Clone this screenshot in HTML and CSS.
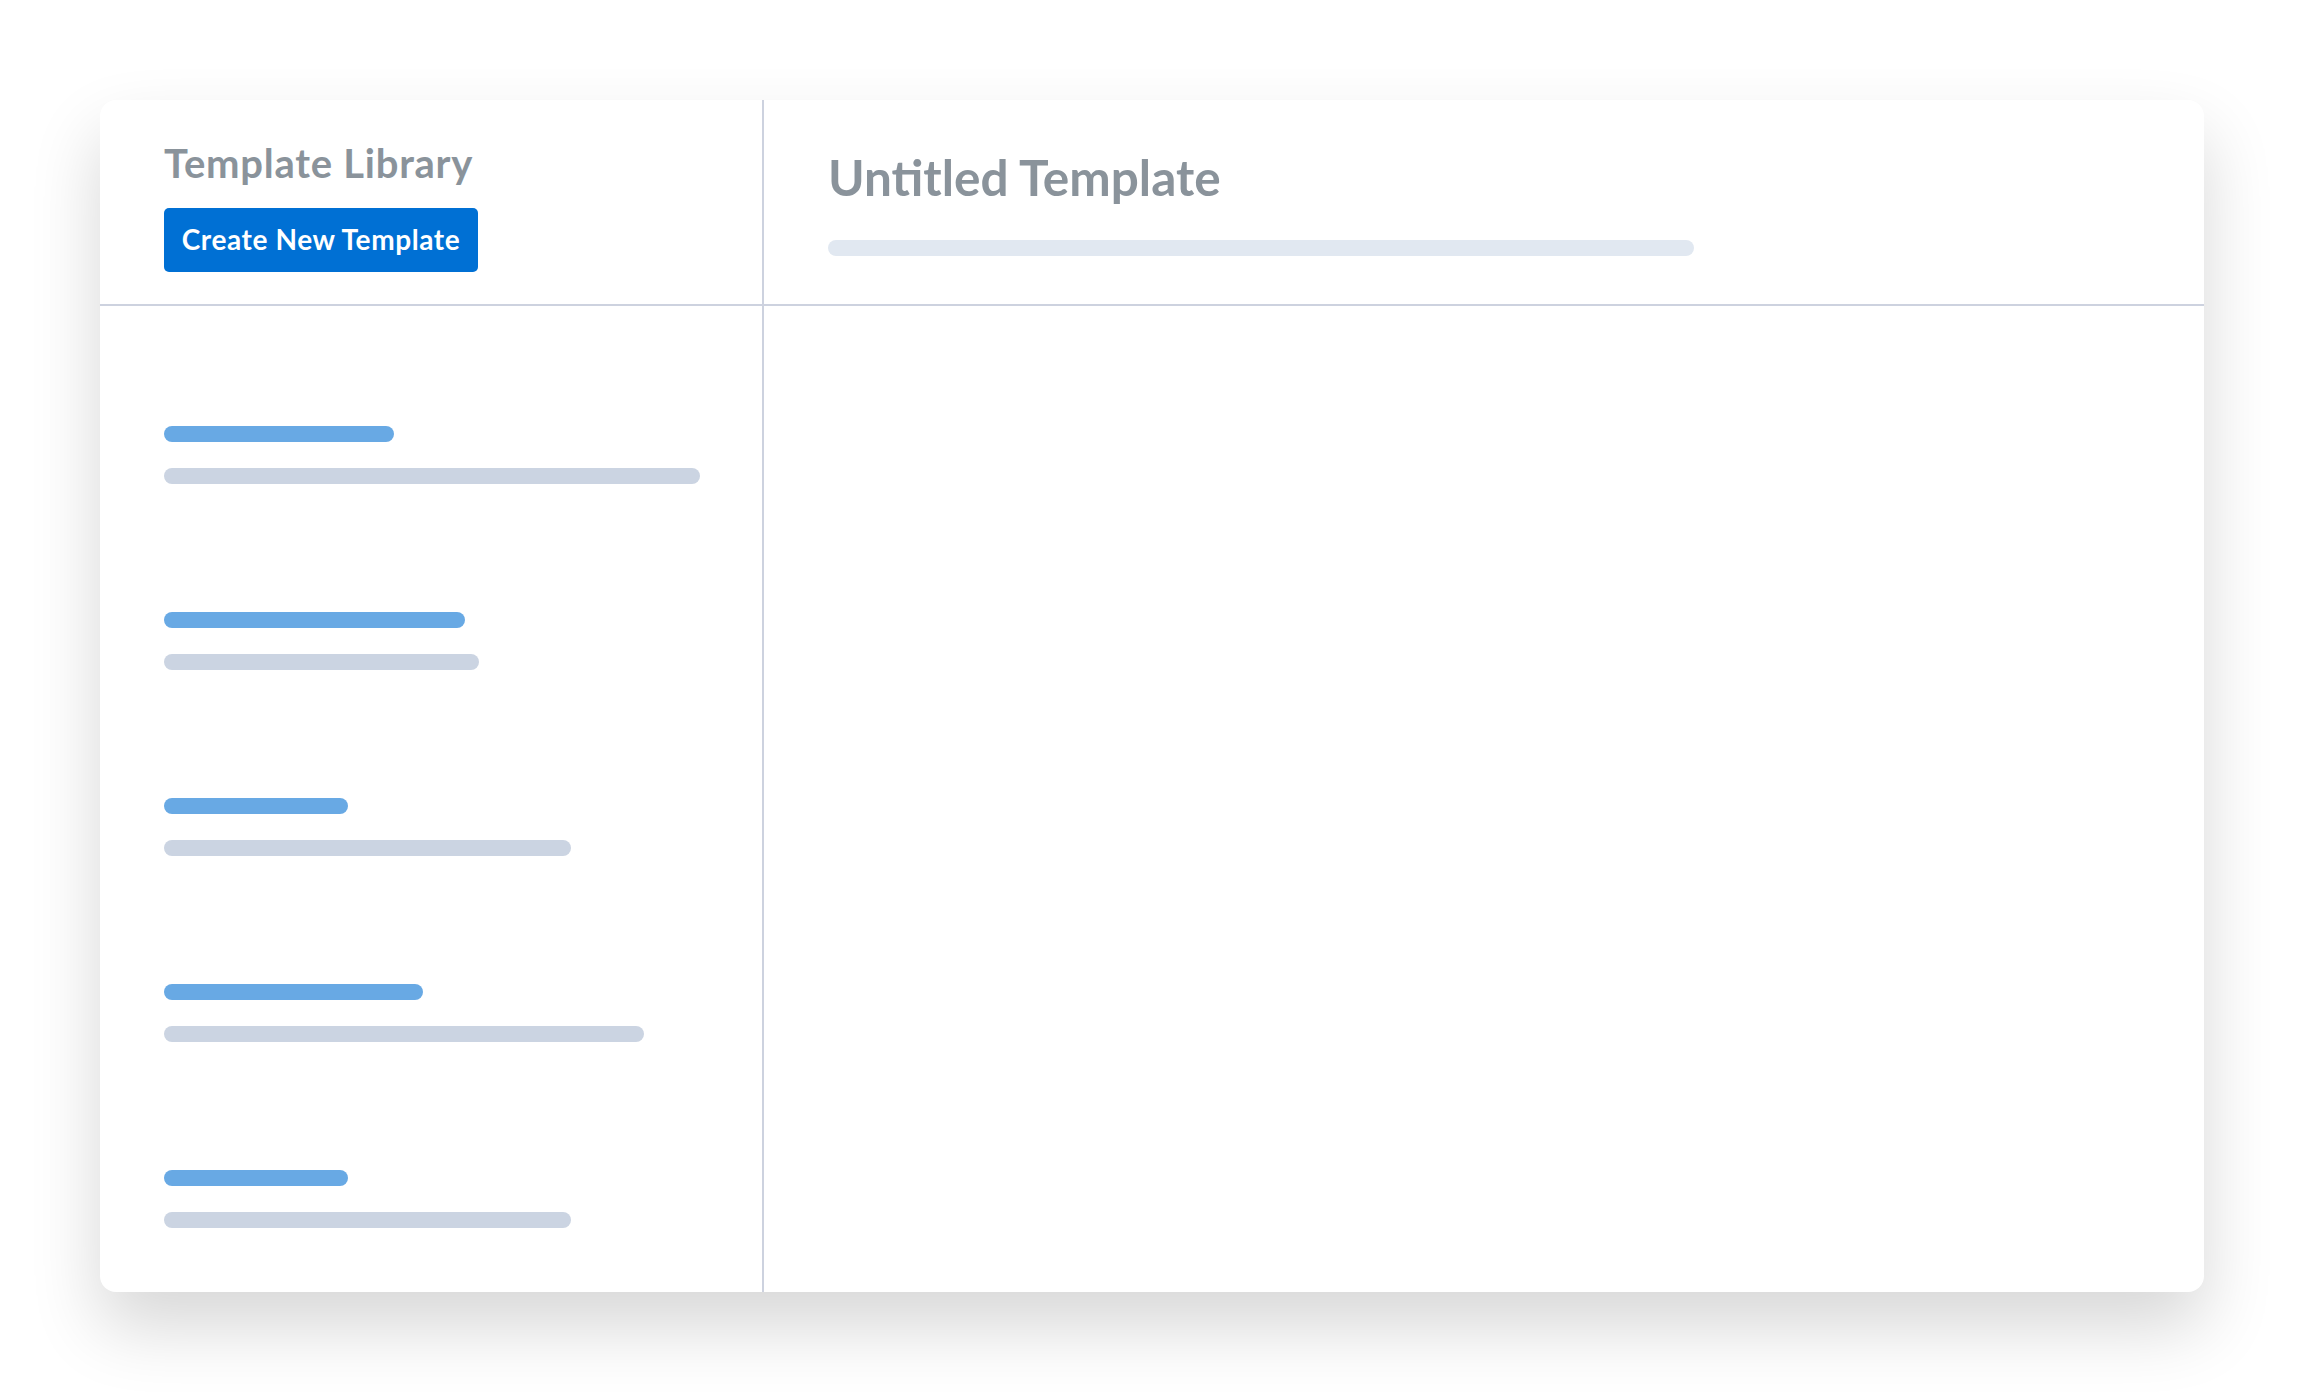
FILE: index.html
```html
<!DOCTYPE html>
<html lang="en">
<head>
<meta charset="utf-8">
<title>Template Library</title>
<link rel="stylesheet" href="styles.css">
</head>
<body>
<div class="page">
  <div class="card">
    <div class="side-head">
      <h2 class="side-title">Template Library</h2>
      <button class="btn-create">Create New Template</button>
    </div>
    <div class="main-head">
      <h1 class="main-title">Untitled Template</h1>
      <div class="bar bar-title"></div>
    </div>
    <div class="side-list">
      <div class="item">
        <div class="bar bar-blue" style="width:230px"></div>
        <div class="bar bar-gray" style="width:536px"></div>
      </div>
      <div class="item">
        <div class="bar bar-blue" style="width:301px"></div>
        <div class="bar bar-gray" style="width:315px"></div>
      </div>
      <div class="item">
        <div class="bar bar-blue" style="width:184px"></div>
        <div class="bar bar-gray" style="width:407px"></div>
      </div>
      <div class="item">
        <div class="bar bar-blue" style="width:259px"></div>
        <div class="bar bar-gray" style="width:480px"></div>
      </div>
      <div class="item">
        <div class="bar bar-blue" style="width:184px"></div>
        <div class="bar bar-gray" style="width:407px"></div>
      </div>
    </div>
    <div class="main-body"></div>
  </div>
</div>
</body>
</html>
```

FILE: styles.css
```css
* { box-sizing: border-box; }
html, body {
  margin: 0;
  padding: 0;
  background: #ffffff;
  font-family: Lato, "Open Sans", "Liberation Sans", sans-serif;
}
.page {
  width: 2304px;
  height: 1392px;
  padding: 100px;
  overflow: hidden;
}
.card {
  width: 2104px;
  height: 1192px;
  background: #ffffff;
  border-radius: 16px;
  box-shadow: 0 35px 70px rgba(0, 0, 0, 0.16);
  display: grid;
  grid-template-columns: 664px 1fr;
  grid-template-rows: 206px 1fr;
  overflow: hidden;
}
.side-head {
  border-right: 2px solid #cdd2df;
  border-bottom: 2px solid #cdd2df;
  padding: 39px 64px 0 64px;
  display: flex;
  flex-direction: column;
  align-items: flex-start;
}
.side-title {
  margin: 0;
  font-size: 40px;
  line-height: 48px;
  font-weight: 700;
  letter-spacing: 0.75px;
  color: #8a939b;
}
.btn-create {
  margin-top: 21px;
  height: 64px;
  width: 314px;
  padding: 0 0 2px 0;
  text-align: center;
  border: none;
  border-radius: 5px;
  background: #0070d4;
  color: #ffffff;
  font-family: Lato, "Open Sans", "Liberation Sans", sans-serif;
  font-size: 28px;
  font-weight: 700;
  letter-spacing: 0.6px;
  line-height: 32px;
}
.main-head {
  border-bottom: 2px solid #cdd2df;
  padding: 47px 64px 0 64px;
}
.main-title {
  margin: 0;
  font-size: 49.5px;
  line-height: 60px;
  font-weight: 700;
  color: #8a939b;
}
.bar {
  height: 16px;
  border-radius: 8px;
}
.bar-title {
  margin-top: 33px;
  width: 866px;
  background: #e1e8f1;
}
.side-list {
  border-right: 2px solid #cdd2df;
  padding: 56px 64px 0 64px;
  overflow: hidden;
}
.item {
  padding: 64px 0;
  display: flex;
  flex-direction: column;
  gap: 26px;
}
.bar-blue { background: #68a9e4; }
.bar-gray { background: #cbd4e2; }
.main-body { }
```
